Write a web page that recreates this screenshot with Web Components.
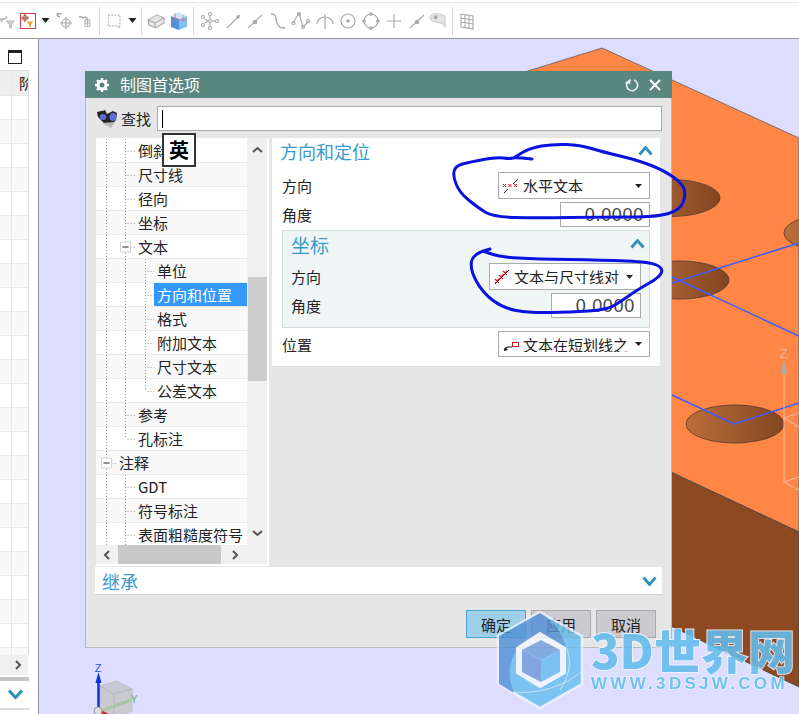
<!DOCTYPE html>
<html lang="zh">
<head>
<meta charset="UTF-8">
<title>制图首选项</title>
<style>
  html, body { margin: 0; padding: 0; }
  body {
    width: 799px; height: 714px; overflow: hidden; background: #fff; position: relative;
    font: 15px/1 "Noto Sans CJK SC", sans-serif; color: #222;
    display: flex; flex-direction: column;
  }
</style>
</head>
<body>
  <cad-toolbar></cad-toolbar>
  <div style="display:flex;flex:1;min-height:0">
    <side-panel></side-panel>
    <model-view>
      <pref-dialog></pref-dialog>
    </model-view>
  </div>
  <ink-marks></ink-marks>
  <site-mark></site-mark>

<script>
  // Base class: open shadow root filled from a markup string
  class Shadow extends HTMLElement {
    constructor() {
      super();
      this.attachShadow({ mode: 'open' });
    }
    connectedCallback() {
      this.shadowRoot.innerHTML = `<style>${this.css()}</style>${this.html()}`;
    }
    css() { return ':host{display:block}'; }
    html() { return '<slot></slot>'; }
  }

  const g = (s) => `<svg width="20" height="20" viewBox="0 0 20 20" fill="none" stroke="#a8a8a8" stroke-width="1.1">${s}</svg>`;
  const TOOL_ICONS = {
    filter: g(`<path d="M0 8h5l3-3M0 8l3 3" stroke="#bbb" stroke-width="2"/><path d="M7 10h9l-3.500 4v4l-2-1v-3z" fill="#ccc" stroke="#bbb"/>`),
    select: `<svg width="16" height="16" viewBox="0 0 16 16" fill="none" style="display:block"><rect x=".5" y=".5" width="15" height="15" stroke="#c8404a"/><circle cx="5" cy="5" r="2.400" stroke="#a8453f"/><path d="M5 1v8M1 5h8" stroke="#a8453f"/><path d="M6.500 8.500h7l-2.600 3v3l-1.800-1v-2z" fill="#e8a628"/></svg>`,
    caret: `<svg width="9" height="5" viewBox="0 0 9 5"><path d="M.5 0h8L4.500 5z" fill="#222"/></svg>`,
    snap: g(`<path d="M2 5a4 4 0 0 1 5-2M2 5l1-3M2 5l3 1" stroke="#999" stroke-width="1.300"/><circle cx="11" cy="12" r="4"/><path d="M11 6v12M5 12h12"/>`),
    snap2: g(`<path d="M1 4h4l2 2 3-2 3 2v3" stroke="#b0b0b0" stroke-width="2"/><path d="M10 8h7v10h-7zM10 11h7M10 14h7M13.500 8v10"/>`),
    rect: g(`<rect x="2.500" y="3.500" width="13" height="12" stroke-dasharray="2 1.500"/><path d="M13 17h3"/>`),
    box: g(`<path d="M2 9l9-5 7 3v5l-8 5-7-3z" fill="#e8e8e8"/><path d="M2 9l7 3 9-5M9 12v5" /><path d="M4 8l7-4" stroke-width="2" stroke="#ccc"/>`),
    cube: `<svg width="18" height="18" viewBox="0 0 18 18" style="display:block"><path d="M1 4l8 3v11l-8-3z" fill="#4e93dc"/><path d="M9 7l8-3v11l-8 3z" fill="#7fc0ee"/><path d="M1 4l7-4 9 4-8 3z" fill="#cfe6f6"/><path d="M5 1v5l8 3V3M5 6l-4 3M13 9l4-2" fill="none" stroke="#e36b85" stroke-width=".8"/></svg>`,
    points: g(`<circle cx="3" cy="6" r="1.500"/><circle cx="3" cy="14" r="1.500"/><circle cx="10" cy="3" r="1.500"/><circle cx="10" cy="17" r="1.500"/><circle cx="17" cy="10" r="1.500"/><circle cx="10" cy="10" r="1.500"/><path d="M5 8l3 2M5 12l3-2M12 10h3M10 5v3M10 12v3"/>`),
    line: g(`<path d="M4 17L17 4"/><circle cx="15" cy="6" r="1.200" fill="#aaa"/>`),
    linemid: g(`<path d="M3 17L17 4"/><circle cx="10" cy="11" r="1.800" fill="#aaa"/>`),
    curve: g(`<path d="M3 3c7 0 4 6 6 9s1 5 8 5" stroke-width="1.300"/>`),
    spline: g(`<path d="M2 12L8 2l4 14 6-6" /><circle cx="2.500" cy="12" r="1.500"/><circle cx="8" cy="3" r="1.500"/><circle cx="12" cy="16" r="1.500"/><circle cx="17" cy="10" r="1.500"/>`),
    arc: g(`<path d="M2 13a8 7 0 0 1 16 0M10 3v15" stroke-width="1.200"/>`),
    circle: g(`<circle cx="10" cy="10" r="7" stroke-width="1.200"/><circle cx="10" cy="10" r="1.200" fill="#aaa"/>`),
    circle4: g(`<circle cx="10" cy="10" r="7" stroke-width="1.200"/><circle cx="10" cy="3" r="1.300" fill="#bbb"/><circle cx="10" cy="17" r="1.300" fill="#bbb"/><circle cx="3" cy="10" r="1.300" fill="#bbb"/><circle cx="17" cy="10" r="1.300" fill="#bbb"/>`),
    plus: g(`<path d="M10 3v14M3 10h14" stroke-width="1.100"/>`),
    face: g(`<path d="M2 7c0-3 3-5 6-5 4 0 7 1 10 3v11c-2-3-4-4-5-4-4-1-8 0-11-5z" fill="#e4e4e4" stroke="#ccc"/><circle cx="8" cy="6" r="1.500" fill="#aaa"/>`),
    grid: g(`<path d="M4 3l12 2v13l-12-2zM8 3.700v13M12 4.300v13M4 7l12 2M4 11l12 2"/>`)
  };

  class CadToolbar extends Shadow {
    css() {
      return `:host{display:flex;align-items:center;height:39px;box-sizing:border-box;flex:none;
                border-bottom:1px solid #8e939c;padding-top:3px;
                background:linear-gradient(#fff 2px,#e6e6e6 2px,#e6e6e6 3px,#fff 3px)}
              span{display:flex;justify-content:center;align-items:center;height:20px;flex:none}
              i{display:block;width:1px;height:28px;background:#d6d6d6}
              svg{display:block;filter:blur(.35px)}`;
    }
    html() {
      const items = [['filter',18],['select',20],['caret',14],['snap',26],['snap2',14],['sep',14],['rect',18],['caret',16],['sep',2],
        ['box',28],['cube',18],['sep',10],['points',23],['line',23],['linemid',22],['curve',23],['spline',24],['arc',23],
        ['circle',23],['circle4',23],['plus',23],['linemid',23],['face',19],['sep',10],['grid',20]];
      return items.map(([k, w]) => `<span style="width:${w}px">${k === 'sep' ? '<i></i>' : TOOL_ICONS[k]}</span>`).join('');
    }
  }
  customElements.define('cad-toolbar', CadToolbar);

  class SidePanel extends Shadow {
    css() {
      return `:host{display:flex;flex-direction:column;width:39px;flex:none;box-sizing:border-box;border-right:1px solid #8e939c;background:#fff}
              .win{height:31px;flex:none;padding:11px 0 0 8px;box-sizing:border-box}
              .win b{display:block;width:12px;height:10px;border:1.500px solid #222;border-top-width:3px}
              .table{width:29px;flex:1;min-height:0;overflow:hidden;box-sizing:border-box;border-right:1px solid #ddd;border-top:1px solid #ddd}
              .row{display:grid;grid-template-columns:12px 16px;height:24px;box-sizing:border-box;border-bottom:1px solid #e8e8e8}
              .row:nth-child(odd){background:#f9f9f9}
              .row span{border-right:1px solid #e8e8e8}
              .row span+span{border:0}
              .head,.head:nth-child(odd){background:#efefef;height:25px}
              .head span+span{font-size:15px;line-height:24px;overflow:hidden;white-space:nowrap;padding-left:7px}
              .hs{height:20px;flex:none;width:28px;background:#f0f0f0;display:flex;justify-content:flex-end;align-items:center;padding-right:6px;box-sizing:border-box}
              .bar{height:4px;width:29px;background:#c4c4c4;margin-top:2px;flex:none}
              .fold{height:27px;flex:none;display:flex;align-items:center;padding-left:8px;box-sizing:border-box}
              .end{height:2px;width:29px;background:#dcdcdc;margin-bottom:4px;flex:none}`;
    }
    html() {
      let rows = '<div class="row head"><span></span><span>阶</span></div>';
      for (let i = 0; i < 24; i++) rows += '<div class="row"><span></span><span></span></div>';
      return `<div class="win"><b></b></div>
        <div class="table">${rows}</div>
        <div class="hs"><svg width="7" height="10" viewBox="0 0 7 10" fill="none" stroke="#555" stroke-width="2"><path d="M1 1l4 4-4 4"/></svg></div>
        <div class="bar"></div>
        <div class="fold"><svg width="15" height="11" viewBox="0 0 15 11" fill="none" stroke="#2f8fb8" stroke-width="3"><path d="M1 1.500l6.500 7 6.500-7"/></svg></div>
        <div class="end"></div>`;
    }
  }
  customElements.define('side-panel', SidePanel);

  class ModelView extends Shadow {
    css() {
      return `:host{display:block;flex:1;position:relative;background:#dddeff;overflow:hidden}
              svg{position:absolute;left:0;top:0}`;
    }
    html() {
      return `<svg width="760" height="675" viewBox="39 39 760 675">
        <defs><linearGradient id="h"><stop offset="0" stop-color="#bd6d3c"/><stop offset=".55" stop-color="#9c582d"/><stop offset="1" stop-color="#824520"/></linearGradient></defs>
        <polygon points="515,75 602,48 799,138 799,532 660,467 515,400" fill="#ff8644" stroke="#5a5a66" stroke-width=".8"/>
        <polygon points="660,467 799,532 799,687 660,621" fill="#8d4a22" stroke="#444" stroke-width=".8"/>
        <g fill="url(#h)" stroke="#4a3a30" stroke-width=".8">
          <ellipse cx="671" cy="198" rx="49" ry="18.500"/>
          <ellipse cx="680" cy="280" rx="49" ry="19"/>
          <ellipse cx="735" cy="424" rx="49" ry="19"/>
          <ellipse cx="833" cy="233" rx="49" ry="19"/>
        </g>
        <g fill="none" stroke="#3f5cff" stroke-width="1.500">
          <path d="M672 277L799 336"/><path d="M672 283L799 243"/><path d="M672 395L734 424L799 403"/>
        </g>
        <g fill="none" stroke="#f5b798" stroke-width="1.100">
          <path d="M784 372V482L799 477M784 482L799 490M784 418L799 413M784 418L799 427"/>
        </g>
        <path d="M784 359l-3.500 15h7z" fill="#b4aaa4"/>
        <text x="784" y="358" text-anchor="middle" font-family="Liberation Sans" font-size="13" fill="#e8b8a0">Z</text>
        <g>
          <path d="M100 686l17-5 15 8v22l-15 5-17-8z" fill="#c9c9d2" stroke="#bdbdc6"/>
          <path d="M100 686l14 8 18-5M114 694v22" fill="none" stroke="#b4b4bc"/>
          <path d="M101 711l30-11" stroke="#a8c8a0" stroke-width="3"/>
          <path d="M102 712l10 5" stroke="#c8303a" stroke-width="3"/>
          <path d="M98.500 680v32" stroke="#0a36d8" stroke-width="2.500"/>
          <path d="M98.500 672l-3 11h6z" fill="#0a36d8"/>
          <circle cx="98" cy="711" r="4" fill="#ddd" stroke="#888" stroke-width=".8"/>
          <text x="98" y="672" text-anchor="middle" font-family="Liberation Sans" font-size="11" fill="#2a50f0">Z</text>
          <text x="134" y="703" text-anchor="middle" font-family="Liberation Sans" font-size="10" fill="#6aa86a">Y</text>
        </g>
      </svg><slot></slot>`;
    }
  }
  customElements.define('model-view', ModelView);

  class ImeBadge extends Shadow {
    css() {
      return `:host{position:absolute;left:76px;top:35px;width:34px;height:34px;box-sizing:border-box;border:2px solid #333;background:#fff;
                display:flex;align-items:center;justify-content:center;font-size:20px;font-weight:700;color:#000}`;
    }
  }
  customElements.define('ime-badge', ImeBadge);

  class TreeRow extends Shadow {
    css() {
      return `:host{display:flex;height:24px;box-sizing:border-box;border-bottom:1px solid #e8e8e8;background:#fff;white-space:nowrap;overflow:hidden}
              :host(:nth-child(even)){background:#f9f9f9}
              svg{flex:none;display:block}
              .t{flex:1;padding-left:3px;line-height:24px;height:23px}
              :host([selected]) .t{background:#3399ff;color:#fff}`;
    }
    html() {
      const level = +this.getAttribute('level');
      const xs = [10.5, 29.5, 49.5];
      const w = [20, 39, 58][level];
      let s = '';
      for (let i = 0; i <= level; i++) {
        const stop = i === level && this.hasAttribute('last') ? 12 : 24;
        s += `<path d="M${xs[i]} 0V${stop}" stroke-dasharray="1 2"/>`;
      }
      s += `<path d="M${xs[level] + 2} 12.500H${w}" stroke-dasharray="1 2"/>`;
      if (this.hasAttribute('box')) {
        const x = xs[level];
        s += `<rect x="${x - 5}" y="7" width="10" height="10" fill="#fff" stroke="#d4d4d4"/><path d="M${x - 3} 12H${x + 3}" stroke="#222"/>`;
      }
      return `<svg width="${w}" height="24" fill="none" stroke="#999">${s}</svg><span class="t"><slot></slot></span>`;
    }
  }
  customElements.define('tree-row', TreeRow);

  class TreePanel extends Shadow {
    css() {
      return `:host{display:grid;grid-template-columns:151px 1fr;grid-template-rows:407px 19px;width:173px;height:428px;flex:none;
                background:#f0f0f0;box-sizing:border-box;margin-left:1px;border-right:2px solid #fff;border-bottom:2px solid #fff}
              .list{overflow:hidden;padding-top:1px;box-sizing:border-box;background:#fff}
              .v{display:flex;flex-direction:column;align-items:center;margin-left:1px;position:relative;justify-content:space-between;padding:8px 0}
              .v b{position:absolute;left:0;right:0;top:139px;height:104px;background:#cdcdcd}
              .h{grid-column:1/3;display:flex;align-items:center;padding-left:7px}
              .h b{display:block;width:103px;height:19px;background:#c8c8c8;margin:0 11px 0 8px}
              svg{display:block}`;
    }
    html() {
      const chev = (d, w = 11, h = 7) => `<svg width="${w}" height="${h}" viewBox="0 0 ${w} ${h}" fill="none" stroke="#555" stroke-width="2"><path d="${d}"/></svg>`;
      return `<div class="list"><slot></slot></div>
        <div class="v">${chev('M1 6l4.500-4 4.500 4')}<b></b>${chev('M1 1l4.500 4 4.500-4')}</div>
        <div class="h">${chev('M6 1L2 5l4 4', 7, 10)}<b></b>${chev('M1 1l4 4-4 4', 7, 10)}</div>`;
    }
  }
  customElements.define('tree-panel', TreePanel);

  class SectionHead extends Shadow {
    css() {
      return `:host{display:flex;justify-content:space-between;align-items:center;height:28px;box-sizing:border-box;font-size:18px;color:#3a9acb}
              :host([big]){font-size:19px;padding-bottom:2px}
              :host([lift]){padding-bottom:2px}
              svg{display:block;flex:none}`;
    }
    html() {
      const d = this.hasAttribute('down') ? 'M1.500 1.500L7.500 8.500l6-7' : 'M1.500 8.500L7.500 1.500l6 7';
      return `<span><slot></slot></span><svg width="15" height="10" viewBox="0 0 15 10" fill="none" stroke="#2f8fb8" stroke-width="2.800"><path d="${d}"/></svg>`;
    }
  }
  customElements.define('section-head', SectionHead);

  class FormRow extends Shadow {
    css() {
      return `:host{display:flex;justify-content:space-between;align-items:center;margin-top:3px}`;
    }
    html() { return `<slot name="label"></slot><slot></slot>`; }
  }
  customElements.define('form-row', FormRow);

  const COMBO_ICONS = {
    horiz: `<path d="M1 15l4-4M10 6l5-5" stroke="#222"/><path d="M0 6l3 3M3 6L0 9M5.500 6l3 3M8.500 6l-3 3M11 6l3 3M14 6l-3 3" stroke="#e0141c"/>`,
    along: `<path d="M1 15L15 1" stroke="#222"/><path d="M1 10l4 4M5 10l-4 4M5 6l4 4M9 6l-4 4M9 2l4 4M13 2L9 6" stroke="#e0141c" stroke-width="1.200"/>`,
    stub: `<path d="M1 14l3-3h5" fill="none" stroke="#222" stroke-width="1.200"/><path d="M1 15l1-4 3 3z" fill="#222"/><rect x="9.500" y="6.500" width="6" height="4" fill="#fff" stroke="#d01a20"/>`
  };
  class ComboBox extends Shadow {
    css() {
      return `:host{display:flex;align-items:center;box-sizing:border-box;width:152px;height:27px;border:1px solid #aaa;background:#fff;padding-left:4px;flex:none;white-space:nowrap}
              svg{flex:none;display:block;margin-right:4px}
              span{flex:1;overflow:hidden}
              .c{flex:none;margin:0 7px 0 0}`;
    }
    html() {
      return `<svg width="16" height="16" viewBox="0 0 16 16" fill="none">${COMBO_ICONS[this.getAttribute('icon')]}</svg>
        <span><slot></slot></span>
        <svg class="c" width="7" height="4" viewBox="0 0 7 4"><path d="M0 0h7L3.500 4z" fill="#222"/></svg>`;
    }
  }
  customElements.define('combo-box', ComboBox);

  class NumField extends Shadow {
    css() {
      return `:host{display:block;box-sizing:border-box;width:90px;height:25px;border:1px solid #aaa;background:#fff;text-align:right;padding-right:5px;
                font:18px/24px "Liberation Sans",sans-serif;letter-spacing:.7px;color:#444;flex:none}`;
    }
  }
  customElements.define('num-field', NumField);

  class DlgButton extends Shadow {
    css() {
      return `:host{display:flex;align-items:center;justify-content:center;box-sizing:border-box;width:60px;height:28px;border:1px solid #a9a9ab;background:#cbcbcf;flex:none}
              :host([primary]){background:#9fcfe8;border-color:#4aa3d4}`;
    }
  }
  customElements.define('dlg-button', DlgButton);

  class PrefDialog extends Shadow {
    css() {
      return `:host{position:absolute;left:46px;top:32px;width:587px;height:577px;display:flex;flex-direction:column}
              .title{height:27px;flex:none;box-sizing:border-box;background:#5a8680;color:#fff;display:flex;align-items:center;font-size:16px;padding:0 10px}
              .title svg{display:block;flex:none}
              .title span{flex:1;margin:0 0 2px 11px}
              .body{flex:1;background:#e6e6e6;border:1px solid #b8b8b8;border-top:0;padding:8px 9px 0;position:relative;min-height:0}
              .search{display:flex;align-items:center;height:25px}
              .search svg{display:block;margin-left:1px}
              .search span{margin:0 6px 0 3px;width:30px;white-space:nowrap}
              .input{flex:1;height:25px;box-sizing:border-box;border:1px solid #aaa;background:#fff;padding:3px 0 0 4px}
              .input b{display:block;width:1px;height:18px;background:#000}
              .main{display:flex;gap:3px;margin-top:7px;height:428px}
              .right{width:388px;flex:none}
              .pane{background:#fff;padding:0 10px 9px;box-sizing:border-box;border-bottom:1px solid #ddd}
              .pane>section-head{margin-left:-2px;margin-right:-3px}
              .group{margin-top:3px;background:#f0f5f6;border:1px solid #d5dcdc;padding:0 8px 9px 8px}
              .group section-head{margin-right:-4px}
              .group form-row:nth-of-type(1){margin-top:4px}
              .pane>form-row:nth-of-type(1){margin-top:6px}
              .inherit{margin-top:1px;height:28px;background:#fff;padding:0 5px 0 7px;box-sizing:border-box;border-bottom:1px solid #d0d0d0}
              .foot{display:flex;justify-content:flex-end;gap:5px;margin-top:15px;padding-right:6px}`;
    }
    html() {
      return `<div class="title">
          <svg width="14" height="14" viewBox="0 0 14 14"><circle cx="7" cy="7" r="4" fill="none" stroke="#fff" stroke-width="3"/><path d="M7 0v3M7 11v3M0 7h3M11 7h3M2 2l2 2M10 10l2 2M12 2l-2 2M4 10l-2 2" stroke="#fff" stroke-width="2.400"/></svg>
          <span>制图首选项</span>
          <svg width="14" height="14" viewBox="0 0 14 14" fill="none" style="margin-right:10px"><path d="M3 3.500A5.500 5.500 0 1 0 9 2" stroke="#e8eeee" stroke-width="1.600"/><path d="M5.500 0v5.500H0z" transform="rotate(10 3 3)" fill="#e8eeee"/></svg>
          <svg width="12" height="12" viewBox="0 0 12 12" style="margin-right:1px"><path d="M1 1l10 10M11 1L1 11" stroke="#fff" stroke-width="2"/></svg>
        </div>
        <div class="body">
          <div class="search">
            <svg width="22" height="19" viewBox="0 0 22 19"><path d="M1 3l8-2 2 4 6-3 4 2-1 7-6 6-5-2-7-7z" fill="#222"/><path d="M6 14l9 5 4-6z" fill="#bbb"/><ellipse cx="7" cy="8" rx="3.500" ry="3" fill="#5a6ad0"/><ellipse cx="17" cy="8" rx="3.500" ry="4" fill="#5a70d8"/><path d="M2 2l6-1M13 2l6-1" stroke="#ddd"/></svg>
            <span>查找</span>
            <div class="input"><b></b></div>
          </div>
          <div class="main">
            <tree-panel>
              <tree-row level="1">倒斜角</tree-row>
              <tree-row level="1">尺寸线</tree-row>
              <tree-row level="1">径向</tree-row>
              <tree-row level="1">坐标</tree-row>
              <tree-row level="1" box>文本</tree-row>
              <tree-row level="2">单位</tree-row>
              <tree-row level="2" selected>方向和位置</tree-row>
              <tree-row level="2">格式</tree-row>
              <tree-row level="2">附加文本</tree-row>
              <tree-row level="2">尺寸文本</tree-row>
              <tree-row level="2" last>公差文本</tree-row>
              <tree-row level="1">参考</tree-row>
              <tree-row level="1" last>孔标注</tree-row>
              <tree-row level="0" box>注释</tree-row>
              <tree-row level="1">GDT</tree-row>
              <tree-row level="1">符号标注</tree-row>
              <tree-row level="1">表面粗糙度符号</tree-row>
            </tree-panel>
            <div class="right">
              <div class="pane">
                <section-head lift>方向和定位</section-head>
                <form-row><span slot="label">方向</span><combo-box icon="horiz">水平文本</combo-box></form-row>
                <form-row><span slot="label">角度</span><num-field>0.0000</num-field></form-row>
                <div class="group">
                  <section-head big>坐标</section-head>
                  <form-row><span slot="label">方向</span><combo-box icon="along">文本与尺寸线对</combo-box></form-row>
                  <form-row><span slot="label">角度</span><num-field>0.0000</num-field></form-row>
                </div>
                <form-row><span slot="label">位置</span><combo-box icon="stub" style="height:26px">文本在短划线之</combo-box></form-row>
              </div>
            </div>
          </div>
          <div class="inherit"><section-head down>继承</section-head></div>
          <div class="foot">
            <dlg-button primary>确定</dlg-button>
            <dlg-button>应用</dlg-button>
            <dlg-button>取消</dlg-button>
          </div>
          <ime-badge>英</ime-badge>
        </div>`;
    }
  }
  customElements.define('pref-dialog', PrefDialog);

  // Hand drawn loops, smoothed through the midpoints
  function smooth(pts) {
    let d = `M${pts[0][0]} ${pts[0][1]}`;
    for (let i = 1; i < pts.length - 1; i++) {
      const mx = (pts[i][0] + pts[i + 1][0]) / 2, my = (pts[i][1] + pts[i + 1][1]) / 2;
      d += `Q${pts[i][0]} ${pts[i][1]} ${mx} ${my}`;
    }
    const l = pts[pts.length - 1];
    return d + `L${l[0]} ${l[1]}`;
  }
  class InkMarks extends Shadow {
    css() {
      return `:host{position:absolute;left:0;top:0;pointer-events:none}
              svg{display:block}`;
    }
    html() {
      const a = [[532,159],[515,157],[510,159],[497,157],[470,162],[455,166],[453,177],[460,193],[477,207],[493,217],[537,218],[603,217],[657,217],[680,210],[686,195],[682,183],[663,170],[637,160],[603,152],[580,145],[553,144],[530,148],[515,157]];
      const b = [[490,249],[473,253],[470,270],[483,293],[503,308],[530,313],[570,312],[607,310],[623,300],[637,290],[660,277],[663,268],[650,262],[603,260],[537,259],[500,257],[483,251]];
      return `<svg width="799" height="714" fill="none" stroke="#0a12e0" stroke-width="3" stroke-linecap="round" stroke-linejoin="round">
        <path d="${smooth(a)}"/><path d="${smooth(b)}"/></svg>`;
    }
  }
  customElements.define('ink-marks', InkMarks);

  class SiteMark extends Shadow {
    css() {
      return `:host{position:absolute;left:496px;top:610px;width:303px;height:104px;pointer-events:none;display:flex}
              svg{display:block;flex:none;opacity:.8}
              .txt{margin-left:7px;padding-top:16px;display:flex;flex-direction:column;white-space:nowrap;opacity:.88}
              .big{font:900 47px/46px "Noto Sans CJK SC",sans-serif;color:#63bdee;-webkit-text-stroke:2px #f0f4ff;paint-order:stroke fill}
              .small{font:700 17px/14px "Liberation Sans",sans-serif;color:#63bdee;-webkit-text-stroke:1.500px #f0f4ff;paint-order:stroke fill;letter-spacing:3.300px;margin-top:5px}`;
    }
    html() {
      return `<svg width="88" height="100" viewBox="496 610 88 100" fill="none">
          <path d="M540 612L582 636V684L540 708L498 684V636Z" fill="#63bdee" stroke="#f0f4ff" stroke-width="2.500"/>
          <path d="M540 613L499 636V684L514 693C504 668 512 642 542 633L566 647C562 632 552 620 540 613Z" fill="#4f8fd6"/>
          <path d="M512 692C530 694 560 690 581 672" stroke="#e8f2ff" stroke-width="1" opacity=".7"/>
          <path d="M566 647C572 660 570 675 560 690" stroke="#e8f2ff" stroke-width="1" opacity=".7"/>
          <path d="M540 633L565 648V673L540 687L517 673V648Z" fill="#f6f8ff" stroke="#f6f8ff" stroke-width="2"/>
          <path d="M541 640L560 650L541 660L522 650Z" fill="#6f9fdc"/>
          <path d="M522 650L541 660V682L522 672Z" fill="#6c98d8"/>
          <path d="M560 650L541 660V682L560 672Z" fill="#65bcee"/>
        </svg>
        <div class="txt"><span class="big">3D世界网</span><span class="small">WWW.3DSJW.COM</span></div>`;
    }
  }
  customElements.define('site-mark', SiteMark);
</script>
</body>
</html>
